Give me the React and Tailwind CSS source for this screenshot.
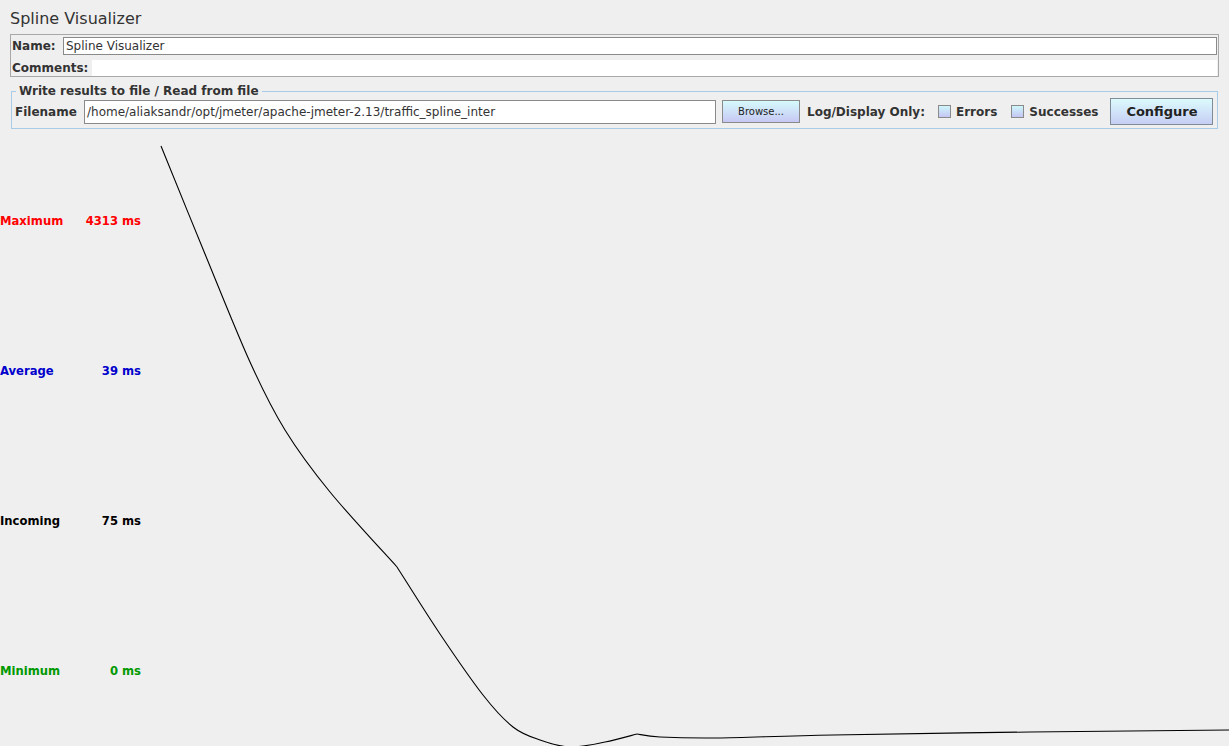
const FONT = { fontFamily: '"DejaVu Sans", Verdana, sans-serif' }

// the curve has sharp corners at the joints, so each piece is smoothed on its own
const PIECES = [
  [[161, 144], [205, 252], [250, 360], [285, 428], [330, 490], [397, 565]],
  [[397, 565], [440, 632], [483, 693], [513, 725], [540, 738], [570, 745], [605, 740], [637, 732]],
  [[637, 732], [660, 735], [717, 736], [833, 733], [1030, 730], [1229, 728]],
]

function smooth(pts) {
  let d = `M${pts[0][0]},${pts[0][1]}`
  for (let i = 0; i < pts.length - 1; i++) {
    const p0 = pts[i - 1] ?? pts[i]
    const p1 = pts[i]
    const p2 = pts[i + 1]
    const p3 = pts[i + 2] ?? p2
    const c1 = [p1[0] + (p2[0] - p0[0]) / 6, p1[1] + (p2[1] - p0[1]) / 6]
    const c2 = [p2[0] - (p3[0] - p1[0]) / 6, p2[1] - (p3[1] - p1[1]) / 6]
    d += ` C${c1[0]},${c1[1]} ${c2[0]},${c2[1]} ${p2[0]},${p2[1]}`
  }
  return d
}

const STATS = [
  { label: 'Maximum', value: '4313 ms', color: 'text-[#ff0000]' },
  { label: 'Average', value: '39 ms', color: 'text-[#0000cc]' },
  { label: 'Incoming', value: '75 ms', color: 'text-black' },
  { label: 'Minimum', value: '0 ms', color: 'text-[#009900]' },
]

function Checkbox({ label }) {
  return (
    <label className="flex items-center gap-[5px] font-bold text-[12px] text-[#333]">
      <span className="w-[13px] h-[13px] border border-[#8a8a8a] bg-gradient-to-b from-[#cff6fa] to-[#c4c6f4]" />
      {label}
    </label>
  )
}

export default function App() {
  return (
    <div className="w-[1229px] h-[746px] bg-[#efefef] overflow-hidden text-[#333]" style={FONT}>
      {/* Title */}
      <div className="h-[34px] pl-[10px] pt-[9px] text-[16px] leading-[19px] text-[#333]">
        Spline Visualizer
      </div>

      {/* Name / comments */}
      <div className="ml-[10px] w-[1209px] h-[43px] border border-[#a8a8a8] flex flex-col">
        <div className="flex items-center h-[22px] pl-[1px] pr-[1px]">
          <span className="font-bold text-[12px] w-[51px]">Name:</span>
          <div className="flex-1 h-[18px] border border-[#8a8a8a] bg-white flex items-center pl-[2px] text-[12px]">
            Spline Visualizer
          </div>
        </div>
        <div className="flex items-center h-[19px] pt-[3px] pl-[1px] pr-[1px]">
          <span className="font-bold text-[12px] w-[80px]">Comments:</span>
          <div className="flex-1 h-[16px] bg-white" />
        </div>
      </div>

      {/* Write results fieldset */}
      <fieldset className="ml-[11px] mt-[7px] w-[1207px] h-[45px] border border-[#a8cbe8] px-[3px] pb-[3px]">
        <legend className="ml-[1px] px-[3px] text-[12px] font-bold leading-[14px] text-[#333]">
          Write results to file / Read from file
        </legend>
        <div className="flex items-center h-[27px]">
          <span className="font-bold text-[12px] w-[69px]">Filename</span>
          <div className="w-[632px] h-[24px] border border-[#8a8a8a] bg-white flex items-center pl-[2px] text-[12px]">
            /home/aliaksandr/opt/jmeter/apache-jmeter-2.13/traffic_spline_inter
          </div>
          <button className="ml-[6px] w-[78px] h-[23px] border border-[#8a8a8a] bg-gradient-to-b from-[#d6fafc] to-[#c6c8f4] text-[10px] text-[#222]">
            Browse...
          </button>
          <span className="ml-[7px] font-bold text-[12px] w-[131px]">Log/Display Only:</span>
          <Checkbox label="Errors" />
          <div className="w-[14px]" />
          <Checkbox label="Successes" />
          <button className="ml-[12px] w-[103px] h-[27px] border border-[#7e8b99] bg-gradient-to-b from-[#dcfbfd] to-[#c6cef4] text-[13px] font-bold text-[#222]">
            Configure
          </button>
        </div>
      </fieldset>

      {/* Chart */}
      <div className="flex h-[618px] mt-[1px]">
        <div className="w-[150px] pt-[17px] flex flex-col">
          {STATS.map((s) => (
            <div
              key={s.label}
              className={`h-[150px] w-[141px] flex items-center justify-between whitespace-nowrap font-bold text-[11.6px] ${s.color}`}
            >
              <span>{s.label}</span>
              <span>{s.value}</span>
            </div>
          ))}
        </div>
        <svg width="1079" height="618" viewBox="150 128 1079 618" className="block">
          {PIECES.map((p, i) => (
            <path key={i} d={smooth(p)} fill="none" stroke="#000" strokeWidth="1.1" />
          ))}
        </svg>
      </div>
    </div>
  )
}
